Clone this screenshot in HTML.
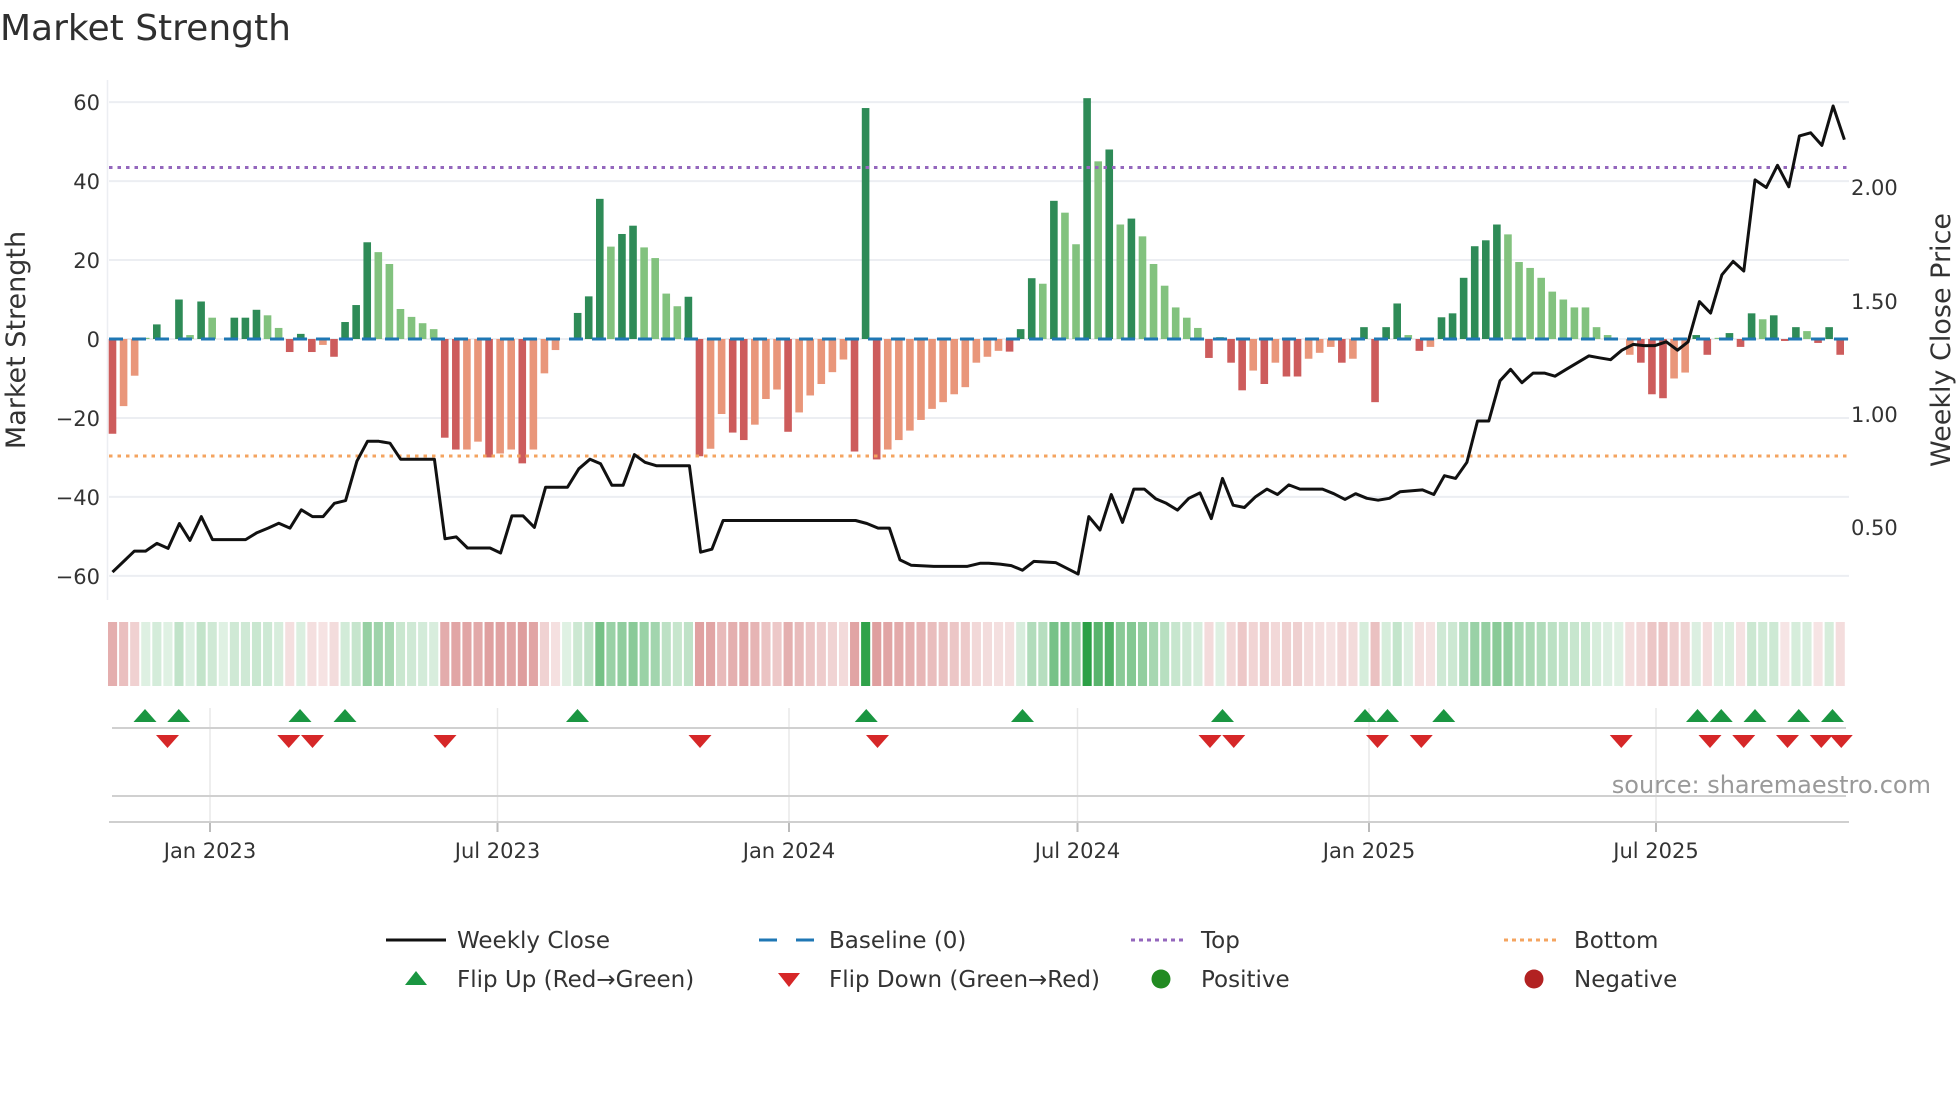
<!DOCTYPE html>
<html><head><meta charset="utf-8"><style>
html,body{margin:0;padding:0;background:#fff;width:1960px;height:1102px;overflow:hidden}
svg{display:block;font-family:"DejaVu Sans","Liberation Sans",sans-serif}
</style></head><body>
<svg id="s" width="1960" height="1102" viewBox="0 0 1960 1102" xmlns="http://www.w3.org/2000/svg">
<text x="0" y="40" font-size="36" fill="#2f2f2f">Market Strength</text>
<g id="grid"></g>
<g id="bars"></g>
<line x1="109" y1="339" x2="1849" y2="339" stroke="#1f77b4" stroke-width="3" stroke-dasharray="14 9"/>
<line x1="109" y1="167.5" x2="1849" y2="167.5" stroke="#9467bd" stroke-width="3" stroke-dasharray="3.5 5"/>
<line x1="109" y1="456" x2="1849" y2="456" stroke="#f4a460" stroke-width="3" stroke-dasharray="3.5 5"/>
<polyline id="price" fill="none" stroke="#111" stroke-width="3" stroke-linejoin="round"/>
<g id="strip"></g>
<g id="tri"></g>
<text x="1931" y="793" font-size="24" fill="#999" text-anchor="end">source: sharemaestro.com</text>
<g font-size="21" fill="#333" text-anchor="middle">
<text x="210" y="858">Jan 2023</text><text x="497.5" y="858">Jul 2023</text><text x="789" y="858">Jan 2024</text>
<text x="1077.5" y="858">Jul 2024</text><text x="1369" y="858">Jan 2025</text><text x="1656" y="858">Jul 2025</text>
</g>
<g font-size="21" fill="#333" text-anchor="end">
<text x="100" y="110">60</text><text x="100" y="189">40</text><text x="100" y="268">20</text><text x="100" y="347">0</text>
<text x="100" y="426">−20</text><text x="100" y="505">−40</text><text x="100" y="584">−60</text>
</g>
<g font-size="21" fill="#333">
<text x="1851" y="195">2.00</text><text x="1851" y="309">1.50</text><text x="1851" y="422">1.00</text><text x="1851" y="535">0.50</text>
</g>
<text transform="translate(25,340) rotate(-90)" font-size="27" fill="#333" text-anchor="middle">Market Strength</text>
<text transform="translate(1950,340) rotate(-90)" font-size="27" fill="#333" text-anchor="middle">Weekly Close Price</text>
<g font-size="23" fill="#333">
<line x1="386" y1="940" x2="446" y2="940" stroke="#111" stroke-width="3"/>
<text x="457" y="948">Weekly Close</text>
<line x1="759" y1="940" x2="814" y2="940" stroke="#1f77b4" stroke-width="3" stroke-dasharray="18 19"/>
<text x="829" y="948">Baseline (0)</text>
<line x1="1131" y1="940" x2="1185" y2="940" stroke="#9467bd" stroke-width="3" stroke-dasharray="4 4"/>
<text x="1201" y="948">Top</text>
<line x1="1504" y1="940" x2="1559" y2="940" stroke="#f4a460" stroke-width="3" stroke-dasharray="4 4"/>
<text x="1574" y="948">Bottom</text>
<polygon points="405,985 427,985 416,971" fill="#1a9641"/>
<text x="457" y="987">Flip Up (Red→Green)</text>
<polygon points="778,973 800,973 789,987" fill="#d62728"/>
<text x="829" y="987">Flip Down (Green→Red)</text>
<circle cx="1161" cy="979" r="9.5" fill="#228b22"/>
<text x="1201" y="987">Positive</text>
<circle cx="1534" cy="979" r="9.5" fill="#b22222"/>
<text x="1574" y="987">Negative</text>
</g>
</svg>
<script>
var NS="http://www.w3.org/2000/svg";
function el(p,t,a){var e=document.createElementNS(NS,t);for(var k in a)e.setAttribute(k,a[k]);document.getElementById(p).appendChild(e);return e;}
[60,40,20,0,-20,-40,-60].forEach(function(v){var y=339-v*3.948;el('grid','line',{x1:109,x2:1849,y1:y,y2:y,stroke:'#eceef2','stroke-width':2});});
el('grid','line',{x1:107.5,x2:107.5,y1:80,y2:600,stroke:'#eceef2','stroke-width':1.5});
[210,497.5,789,1077.5,1369,1656].forEach(function(x){
 el('grid','line',{x1:x,x2:x,y1:708,y2:822,stroke:'#e8e8e8','stroke-width':1.5});
 el('grid','line',{x1:x,x2:x,y1:822,y2:832,stroke:'#bbb','stroke-width':2});});
el('grid','line',{x1:112,x2:1846,y1:728,y2:728,stroke:'#d0d0d0','stroke-width':2});
el('grid','line',{x1:112,x2:1846,y1:796,y2:796,stroke:'#d0d0d0','stroke-width':2});
el('grid','line',{x1:109,x2:1849,y1:822,y2:822,stroke:'#cfcfcf','stroke-width':2});
var B=[[-24,1],[-17,0],[-9.3,0],[0.3,0],[3.7,1],[0,0],[10,1],[1,0],[9.5,1],[5.4,0],[0,0],[5.4,1],[5.4,1],[7.4,1],[6,0],[2.8,0],[-3.3,1],[1.3,1],[-3.3,1],[-1.5,0],[-4.5,1],[4.3,1],[8.6,1],[24.5,1],[22,0],[19,0],[7.6,0],[5.6,0],[4,0],[2.5,0],
[-25,1],[-28,1],[-28,0],[-26,0],[-30,1],[-29,0],[-28,0],[-31.5,1],[-28,0],[-8.7,0],[-2.8,0],[0,0],[6.6,1],[10.8,1],[35.5,1],[23.4,0],[26.6,1],[28.7,1],[23.2,0],[20.5,0],[11.5,0],[8.3,0],[10.7,1],
[-29.7,1],[-27.8,0],[-19,0],[-23.7,1],[-25.6,1],[-21.7,0],[-15.2,0],[-12.8,0],[-23.5,1],[-18.6,0],[-14.3,0],[-11.4,0],[-8.4,0],[-5.2,0],[-28.5,1],[58.5,1],[-30.5,1],[-28,0],[-25.6,0],[-23.2,0],[-20.5,0],[-17.7,0],[-16,0],[-14,0],[-12.2,0],[-6,0],[-4.5,0],[-3,0],[-3.2,1],
[2.5,1],[15.4,1],[14,0],[35,1],[32,0],[24,0],[61,1],[45,0],[48,1],[29,0],[30.5,1],[26,0],[19,0],[13.5,0],[8,0],[5.4,0],[2.8,0],
[-4.8,1],[0.5,0],[-6,1],[-13,1],[-8,0],[-11.4,1],[-6,0],[-9.5,1],[-9.5,1],[-5,0],[-3.5,0],[-2,0],[-6,1],[-5,0],[3,1],[-16,1],[3,1],[9,1],[1,0],[-3,1],[-2,0],
[5.5,1],[6.5,1],[15.5,1],[23.5,1],[25,1],[29,1],[26.5,0],[19.5,0],[18,0],[15.5,0],[12,0],[10,0],[8,0],[8,0],[3,0],[1,0],[0,0],
[-4,0],[-6,1],[-14,1],[-15,1],[-10,0],[-8.5,0],[1,1],[-4,1],[0.3,0],[1.5,1],[-2,1],[6.5,1],[5,0],[6,1],[-0.5,1],[3,1],[2,0],[-1,1],[3,1],[-4,1]];
B.forEach(function(b,i){
 var cx=112.5+11.075*i,v=b[0],h=Math.abs(v)*3.948;
 var c=v>=0?(b[1]?'#2e8b57':'#82c27e'):(b[1]?'#cd5c5c':'#e9967a');
 if(h>0.5)el('bars','rect',{x:cx-3.8,y:v>=0?339-h:339,width:7.6,height:h,fill:c});
 var a=Math.min(1,0.15+Math.abs(v)/60*0.85);
 var base=v>=0?[44,160,70]:[200,90,90];
 var col='rgb('+base.map(function(q){return Math.round(255+(q-255)*a)}).join(',')+')';
 el('strip','rect',{x:cx-5.5+1,y:622,width:9.1,height:64,fill:col});
});
var z1=[[180,1495],[215,1440],[233,1440],[251,1420],[269,1433],[287,1368],[304,1412],[322,1350],[340,1410],[358,1410],[393,1410],[411,1392],[429,1380],[446,1367],[464,1380],[482,1332],[500,1350],[517,1350],[535,1315],[553,1308],[571,1205],[588,1153],[606,1153],[624,1158],[641,1200],[695,1200],[712,1408],[730,1403],[748,1432],[784,1432],[801,1445],[819,1348],[837,1348],[855,1378],[873,1273],[908,1273],[926,1225],[944,1200],[961,1212],[979,1268],[997,1268],[1015,1188],[1032,1208],[1050,1217],[1103,1217],[1121,1443],[1139,1435],[1157,1360],[1369,1360],[1387,1368],[1405,1380],[1423,1380],[1440,1463],[1458,1477],[1494,1480],[1547,1480]];
var z2=[[0,1472],[14,1472],[32,1474],[50,1478],[68,1490],[86,1467],[121,1470],[157,1500],[174,1350],[192,1385],[210,1292],[228,1365],[246,1278],[263,1278],[281,1303],[298,1315],[316,1333],[334,1302],[352,1288],[370,1355],[388,1250],[405,1320],[423,1326],[441,1298],[459,1278],[476,1292],[494,1267],[512,1278],[548,1278],[566,1290],[584,1305],[601,1290],[619,1302],[637,1307],[655,1302],[672,1285],[708,1280],[726,1292],[743,1243],[761,1250],[779,1208],[796,1100],[814,1100],[832,995],[849,965],[867,1000],[885,975],[903,975],[920,983],[938,965],[974,930],[991,935],[1009,940],[1027,915],[1045,900],[1062,903],[1080,903],[1098,893],[1116,915],[1133,893],[1151,788],[1169,818],[1187,718],[1205,683],[1222,708],[1240,470],[1258,490],[1276,432],[1294,488],[1311,355],[1329,347],[1347,380],[1365,277],[1383,365]];
var pts=z1.map(function(p){return (p[0]/1.6).toFixed(1)+','+(p[1]/2.613).toFixed(1)}).concat(z2.map(function(p){return (980+p[0]/1.6).toFixed(1)+','+(p[1]/2.613).toFixed(1)}));
document.getElementById('price').setAttribute('points',pts.join(' '));
[116,143,240,276,462,693,818,978,1092,1110,1155,1358,1377,1404,1439,1466].forEach(function(o){var x=o*1.25;el('tri','polygon',{points:(x-11.5)+',722 '+(x+11.5)+',722 '+x+',709',fill:'#1a9641'});});
[134,231,250,356,560,702,968,987,1102,1137,1297,1368,1395,1430,1457,1473].forEach(function(o){var x=o*1.25;el('tri','polygon',{points:(x-11.5)+',735 '+(x+11.5)+',735 '+x+',748',fill:'#d62728'});});
</script>
</body></html>
